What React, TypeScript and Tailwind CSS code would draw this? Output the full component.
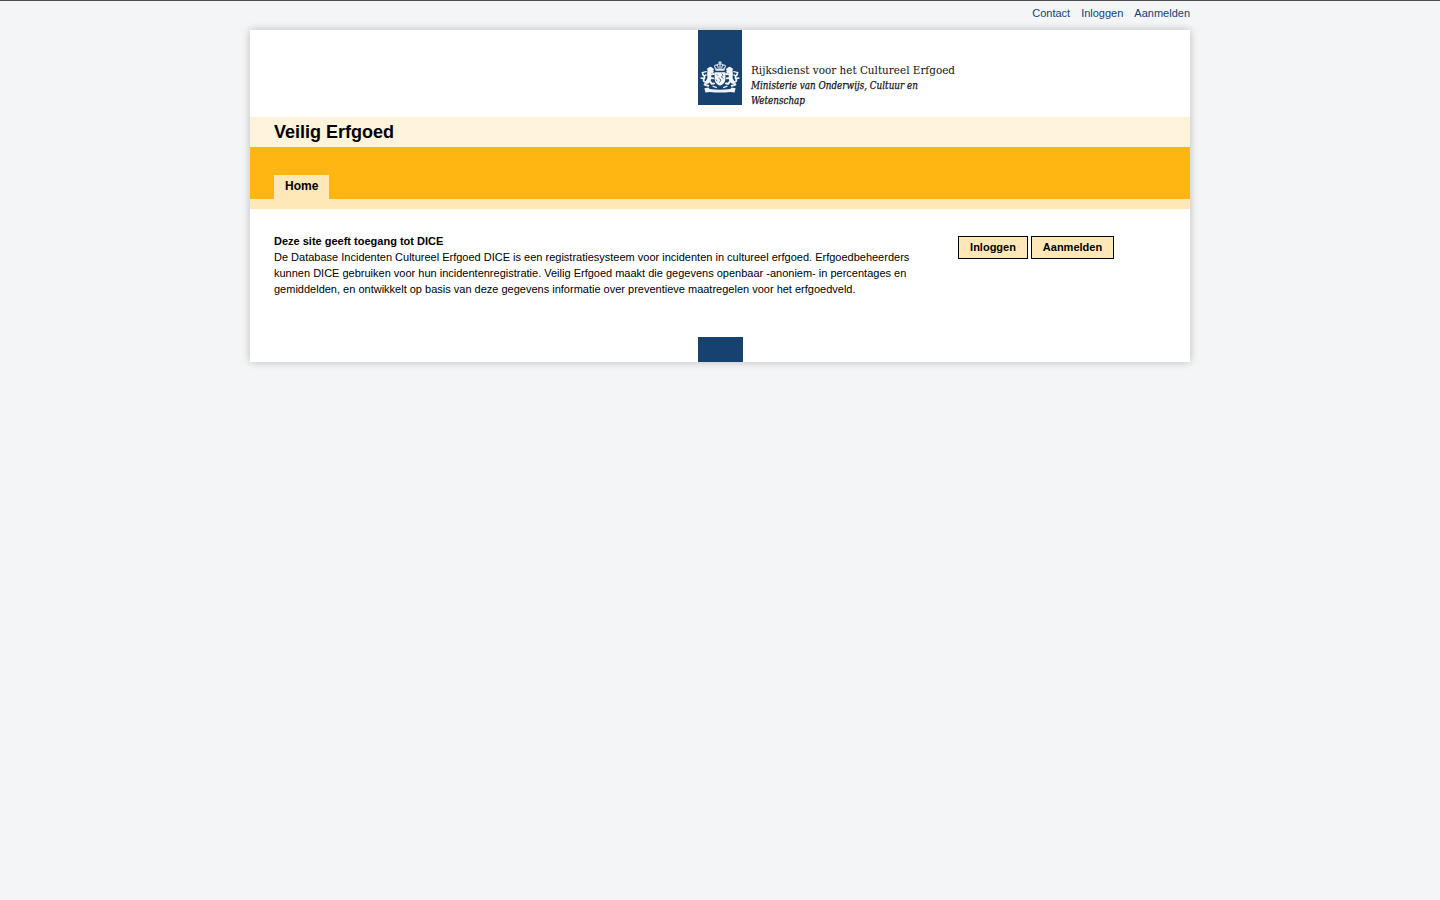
function Lion() {
  return (
    <g fill="none" stroke="#f3f7fa" strokeLinecap="round" strokeLinejoin="round">
      <path d="M12 8.6 L9.8 7 L7.8 8.4 L9.2 10.4 L11.8 10.8" strokeWidth="2.6" />
      <path d="M8.8 10.5 Q8 13.5 8.8 16 Q9 18.6 7 20.6" strokeWidth="4" />
      <path d="M9.6 13.4 L13.4 13 M9.5 17 L12.8 17.4" strokeWidth="1.8" />
      <path d="M8.8 19.6 L11.2 22.8 L13.4 22.4 M6.4 21 L4 23.6 L7.6 24.8" strokeWidth="2" />
      <path d="M5.6 21 Q2 21 3.4 18 Q5 15.6 2.2 13.6 M3 17.6 L0.6 17" strokeWidth="1.7" />
      <path d="M5.6 10.6 L1.6 11.6 L2.6 13.6 M5.4 14 L4 14.6" strokeWidth="1.4" />
    </g>
  );
}

function Logo() {
  return (
    <svg width="270" height="87" viewBox="0 0 270 87" className="block" role="img" aria-label="Rijksdienst voor het Cultureel Erfgoed">
      <rect width="44" height="75" fill="#17426f" />
      <g transform="translate(2.6 31)">
        <g fill="none" stroke="#dfe8f0" strokeLinecap="round">
          <path d="M19.4 0.4 V3 M18.2 1.4 H20.6" strokeWidth="1" />
          <path d="M15.6 8 Q12.6 4.8 15.2 4 Q17.4 3.8 17.6 7 M23.2 8 Q26.2 4.8 23.6 4 Q21.4 3.8 21.2 7 M19.4 3.4 V7.4 M16.6 3.6 Q19.4 1.8 22.2 3.6" strokeWidth="1.1" />
          <path d="M15.6 8.8 H23.2" strokeWidth="1.9" />
        </g>
        <Lion />
        <g transform="translate(38.8 0) scale(-1 1)">
          <Lion />
        </g>
        <path d="M14 11.2 H24.8 V18 Q24.8 22.5 19.4 24.8 Q14 22.5 14 18 Z" fill="#f3f7fa" />
        <g fill="none" stroke="#416688" strokeWidth="0.9">
          <path d="M16 13.2 L17.6 14.8 M21 12.6 L22.6 14 L20.6 16 L23 17.4 M18 17 L20.4 19 L18.8 21.6 M15.4 18.6 L16.6 20.2" />
        </g>
        <path d="M3.8 27.2 L8 26.6 L9 28 Q19.4 29.6 29.8 28 L30.8 26.6 L35 27.2 L34 31.4 L29.6 31 Q19.4 32 9.2 31 L4.8 31.4 Z" fill="#edf3f7" />
        <path d="M12 25.2 L16.2 26.6 M26.8 25.2 L22.6 26.6" fill="none" stroke="#e8eff5" strokeWidth="1.4" />
      </g>
      <g fill="#111" className="font-['DejaVu_Serif_Condensed','DejaVu_Serif',serif]">
        <text x="53" y="44" fontSize="11.6" textLength="204" lengthAdjust="spacingAndGlyphs">Rijksdienst voor het Cultureel Erfgoed</text>
        <g fontSize="11.8" fontStyle="italic" stroke="#111" strokeWidth="0.25">
          <text x="53" y="59" textLength="167" lengthAdjust="spacingAndGlyphs">Ministerie van Onderwijs, Cultuur en</text>
          <text x="53" y="74" textLength="54" lengthAdjust="spacingAndGlyphs">Wetenschap</text>
        </g>
      </g>
    </svg>
  );
}

export default function App() {
  return (
    <div className="min-h-screen border-t border-[#4c4c54] bg-[#f3f5f7] font-['Liberation_Sans',Arial,sans-serif] text-[11px] leading-4 text-black">
      <div className="mx-auto w-[940px]">
        <nav className="flex h-[29px] justify-end gap-[11px] pt-1 text-[#154273]">
          <a href="#">Contact</a>
          <a href="#">Inloggen</a>
          <a href="#">Aanmelden</a>
        </nav>
        <div className="bg-white shadow-[0_0_8px_rgba(0,0,0,0.24)]">
          <header className="h-[87px] pl-[448px]">
            <Logo />
          </header>
          <h1 className="h-[30px] bg-[#fff3dc] pl-6 text-lg leading-[30px] font-bold">Veilig Erfgoed</h1>
          <div className="flex h-[62px] items-end border-b-[10px] border-[#ffe8b7] bg-[#ffb612] pl-6">
            <a href="#" className="h-6 bg-[#ffe8b7] px-[11px] text-xs leading-[22px] font-bold">Home</a>
          </div>
          <main className="flex h-32 pt-6 pl-6">
            <section className="w-[684px]">
              <h2 className="font-bold">Deze site geeft toegang tot DICE</h2>
              <p className="w-[644px]">
                De Database Incidenten Cultureel Erfgoed DICE is een registratiesysteem voor incidenten in cultureel erfgoed. Erfgoedbeheerders kunnen DICE gebruiken voor hun incidentenregistratie. Veilig Erfgoed maakt die gegevens openbaar -anoniem- in percentages en gemiddelden, en ontwikkelt op basis van deze gegevens informatie over preventieve maatregelen voor het erfgoedveld.
              </p>
            </section>
            <div className="flex items-start gap-[3px] pt-[3px] font-bold">
              <button className="h-[23px] w-[70px] border border-black bg-[#ffe8b7] leading-[21px]">Inloggen</button>
              <button className="h-[23px] w-[83px] border border-black bg-[#ffe8b7] leading-[21px]">Aanmelden</button>
            </div>
          </main>
          <footer className="h-[25px] pl-[448px]">
            <div className="h-full w-[45px] bg-[#17426f]" />
          </footer>
        </div>
      </div>
    </div>
  );
}
